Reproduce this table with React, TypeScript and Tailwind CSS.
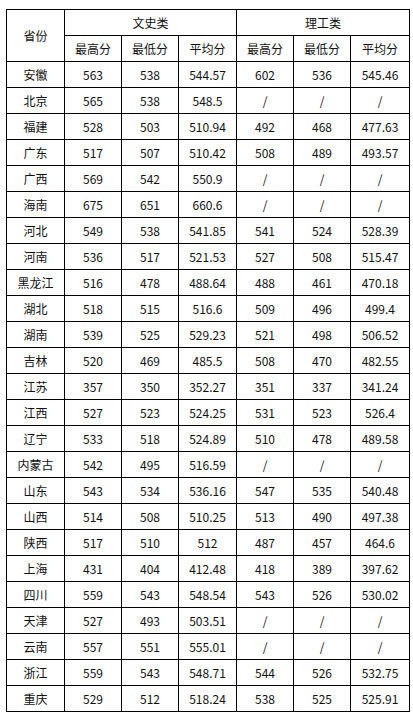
const rows: string[][] = [
  ['安徽', '563', '538', '544.57', '602', '536', '545.46'],
  ['北京', '565', '538', '548.5', '/', '/', '/'],
  ['福建', '528', '503', '510.94', '492', '468', '477.63'],
  ['广东', '517', '507', '510.42', '508', '489', '493.57'],
  ['广西', '569', '542', '550.9', '/', '/', '/'],
  ['海南', '675', '651', '660.6', '/', '/', '/'],
  ['河北', '549', '538', '541.85', '541', '524', '528.39'],
  ['河南', '536', '517', '521.53', '527', '508', '515.47'],
  ['黑龙江', '516', '478', '488.64', '488', '461', '470.18'],
  ['湖北', '518', '515', '516.6', '509', '496', '499.4'],
  ['湖南', '539', '525', '529.23', '521', '498', '506.52'],
  ['吉林', '520', '469', '485.5', '508', '470', '482.55'],
  ['江苏', '357', '350', '352.27', '351', '337', '341.24'],
  ['江西', '527', '523', '524.25', '531', '523', '526.4'],
  ['辽宁', '533', '518', '524.89', '510', '478', '489.58'],
  ['内蒙古', '542', '495', '516.59', '/', '/', '/'],
  ['山东', '543', '534', '536.16', '547', '535', '540.48'],
  ['山西', '514', '508', '510.25', '513', '490', '497.38'],
  ['陕西', '517', '510', '512', '487', '457', '464.6'],
  ['上海', '431', '404', '412.48', '418', '389', '397.62'],
  ['四川', '559', '543', '548.54', '543', '526', '530.02'],
  ['天津', '527', '493', '503.51', '/', '/', '/'],
  ['云南', '557', '551', '555.01', '/', '/', '/'],
  ['浙江', '559', '543', '548.71', '544', '526', '532.75'],
  ['重庆', '529', '512', '518.24', '538', '525', '525.91'],
];

const cell = 'flex items-center justify-center border-r border-b border-black';

export default function App() {
  return (
    <div className="min-h-screen bg-white pl-[6px] pt-[9px] text-[12px] text-[#111] [font-family:'Noto_Sans_CJK_SC','Noto_Sans',sans-serif]">
      <div className="grid w-[404px] grid-cols-[58px_57px_57px_58px_57px_57px_59px] auto-rows-[26px] border-l border-t border-black">
        <div className={`${cell} row-span-2`}>省份</div>
        <div className={`${cell} col-span-3`}>文史类</div>
        <div className={`${cell} col-span-3`}>理工类</div>
        {['最高分', '最低分', '平均分', '最高分', '最低分', '平均分'].map((h, i) => (
          <div key={i} className={cell}>{h}</div>
        ))}
        {rows.map((r) =>
          r.map((v, j) => (
            <div key={r[0] + j} className={cell}>{v}</div>
          ))
        )}
      </div>
    </div>
  );
}
